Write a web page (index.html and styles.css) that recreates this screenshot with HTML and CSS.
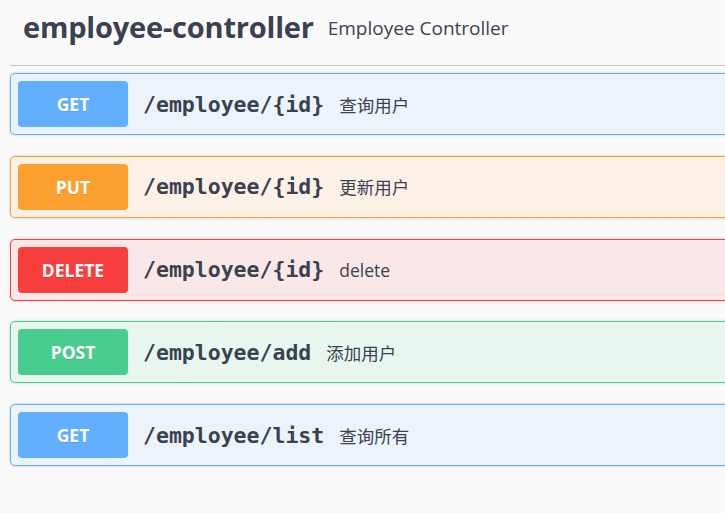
FILE: index.html
```html
<!DOCTYPE html>
<html>
<head>
<meta charset="utf-8">
<link rel="stylesheet" href="styles.css">
</head>
<body>
<div class="section">
  <h3 class="tag">
    <span class="tag-name">employee-controller</span>
    <small class="tag-desc">Employee Controller</small>
  </h3>
  <div class="ops">
    <div class="op op-get">
      <span class="method">GET</span>
      <span class="path">/employee/{id}</span>
      <span class="desc">查询用户</span>
    </div>
    <div class="op op-put">
      <span class="method">PUT</span>
      <span class="path">/employee/{id}</span>
      <span class="desc">更新用户</span>
    </div>
    <div class="op op-delete">
      <span class="method">DELETE</span>
      <span class="path">/employee/{id}</span>
      <span class="desc">delete</span>
    </div>
    <div class="op op-post">
      <span class="method">POST</span>
      <span class="path">/employee/add</span>
      <span class="desc">添加用户</span>
    </div>
    <div class="op op-get">
      <span class="method">GET</span>
      <span class="path">/employee/list</span>
      <span class="desc">查询所有</span>
    </div>
  </div>
</div>
</body>
</html>
```
FILE: styles.css
```css
html, body {
  margin: 0;
  padding: 0;
  overflow: hidden;
  background: #fafafa;
}
body {
  width: 725px;
  height: 513px;
  font-family: "Open Sans", "Noto Sans CJK SC", sans-serif;
  color: #3b4151;
}
.section {
  padding-left: 10px;
  width: 780px;
}
.tag {
  margin: 0;
  display: flex;
  align-items: center;
  gap: 14px;
  padding: 0 0 11px 13px;
  height: 66px;
  box-sizing: border-box;
  border-bottom: 1px solid rgba(59, 65, 81, 0.3);
}
.tag-name {
  font-size: 29px;
  font-weight: 700;
  letter-spacing: -0.2px;
  line-height: 40px;
}
.tag-desc {
  font-size: 19px;
  font-weight: 400;
  padding-top: 1px;
}
.ops {
  padding-top: 7px;
}
.op {
  display: flex;
  align-items: center;
  height: 62px;
  box-sizing: border-box;
  padding: 7px;
  border: 1px solid;
  border-radius: 5px;
  margin-bottom: 20.75px;
  box-shadow: 0 0 3px rgba(0, 0, 0, 0.19);
}
.method {
  width: 110px;
  height: 46px;
  flex: none;
  display: flex;
  align-items: center;
  justify-content: center;
  border-radius: 4px;
  color: #fff;
  font-weight: 700;
  font-size: 17.5px;
  text-shadow: 0 1px 0 rgba(0, 0, 0, 0.1);
}
.path {
  margin-left: 15px;
  font-family: "DejaVu Sans Mono", monospace;
  font-weight: 700;
  font-size: 21.5px;
  color: #3b4151;
}
.desc {
  margin-left: 15px;
  font-size: 17.5px;
  font-family: "Open Sans", "Noto Sans CJK SC", sans-serif;
}
.op-get { background: #ebf3fb; border-color: #61affe; }
.op-get .method { background: #61affe; }
.op-put { background: #fbf1e6; border-color: #fca130; }
.op-put .method { background: #fca130; }
.op-delete { background: #fae7e7; border-color: #f93e3e; }
.op-delete .method { background: #f93e3e; }
.op-post { background: #e8f6f0; border-color: #49cc90; }
.op-post .method { background: #49cc90; }
```
